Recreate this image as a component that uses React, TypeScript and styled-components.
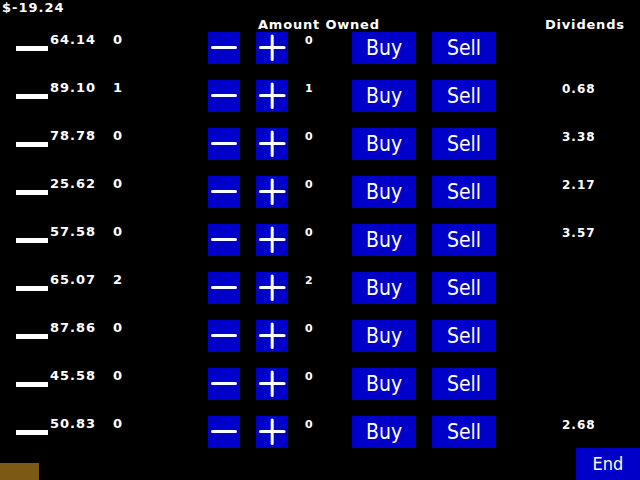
import React from "react";
import styled, { createGlobalStyle } from "styled-components";

const Global = createGlobalStyle`
  html, body { margin: 0; padding: 0; background: #000; overflow: hidden; }
  #root { width: 640px; height: 480px; }
`;

const Page = styled.div`
  width: 640px;
  height: 480px;
  background: #000;
  display: flex;
  flex-direction: column;
  color: #fff;
  font-family: "DejaVu Sans", "Liberation Sans", sans-serif;
  font-weight: bold;
`;

const Money = styled.div`
  height: 16px;
  padding-left: 2px;
  font-size: 13px;
  line-height: 13px;
  letter-spacing: 1px;
  padding-top: 1px;
  box-sizing: border-box;
`;

const cols = "16px 32px 2px 63px 95px 32px 16px 32px 64px 64px 16px 64px 1fr";

const HeaderRow = styled.div`
  height: 16px;
  display: grid;
  grid-template-columns: ${cols};
  font-size: 13px;
  line-height: 13px;
  letter-spacing: 0.8px;
  padding-top: 2px;
  box-sizing: border-box;
`;

const OwnedHeader = styled.div`
  grid-column: 8 / 12;
  padding-left: 2px;
  white-space: nowrap;
`;

const DividendHeader = styled.div`
  grid-column: 13;
  padding-left: 49px;
  white-space: nowrap;
`;

const Rows = styled.div`
  height: 416px;
  display: flex;
  flex-direction: column;
  gap: 16px;
`;

const Row = styled.div`
  height: 32px;
  display: grid;
  grid-template-columns: ${cols};
  align-items: start;
`;

const Bar = styled.div`
  grid-column: 2;
  margin-top: 14px;
  height: 5px;
  background: #fff;
`;

const Small = styled.div<{ $size?: number; $pad?: number; $top?: number }>`
  font-size: ${(p) => p.$size ?? 13}px;
  line-height: ${(p) => p.$size ?? 13}px;
  letter-spacing: 1px;
  padding-left: ${(p) => p.$pad ?? 0}px;
  padding-top: ${(p) => p.$top ?? 0}px;
  white-space: nowrap;
`;

const Button = styled.button<{ $w: number; $size?: number }>`
  width: ${(p) => p.$w}px;
  height: 32px;
  border: none;
  margin: 0;
  padding: 0;
  background: #0000c8;
  color: #fff;
  display: flex;
  align-items: center;
  justify-content: center;
  font-family: "DejaVu Sans Condensed", "DejaVu Sans", sans-serif;
  font-stretch: condensed;
  font-weight: normal;
  font-size: ${(p) => p.$size ?? 21}px;
  line-height: 1;
`;

const Footer = styled.div`
  height: 32px;
  display: flex;
  justify-content: space-between;
  align-items: flex-end;
`;

const Brown = styled.div`
  width: 39px;
  height: 17px;
  background: #7b5b14;
`;

const Minus = () => (
  <svg width="32" height="32" viewBox="0 0 32 32">
    <line x1="4.5" y1="15.5" x2="27.5" y2="15.5" stroke="#fff" strokeWidth="3" strokeLinecap="round" />
  </svg>
);

const Plus = () => (
  <svg width="32" height="32" viewBox="0 0 32 32">
    <line x1="4.5" y1="15.5" x2="28" y2="15.5" stroke="#fff" strokeWidth="3" strokeLinecap="round" />
    <line x1="16.2" y1="4" x2="16.2" y2="27.5" stroke="#fff" strokeWidth="3" strokeLinecap="round" />
  </svg>
);

const data: { price: string; qty: number; div?: string }[] = [
  { price: "64.14", qty: 0 },
  { price: "89.10", qty: 1, div: "0.68" },
  { price: "78.78", qty: 0, div: "3.38" },
  { price: "25.62", qty: 0, div: "2.17" },
  { price: "57.58", qty: 0, div: "3.57" },
  { price: "65.07", qty: 2 },
  { price: "87.86", qty: 0 },
  { price: "45.58", qty: 0 },
  { price: "50.83", qty: 0, div: "2.68" },
];

export default function App() {
  return (
    <Page>
      <Global />
      <Money>$-19.24</Money>
      <HeaderRow>
        <OwnedHeader>Amount Owned</OwnedHeader>
        <DividendHeader>Dividends</DividendHeader>
      </HeaderRow>
      <Rows>
        {data.map((d, i) => (
          <Row key={i}>
            <Bar />
            <span />
            <Small $top={1}>{d.price}</Small>
            <Small $top={1}>{d.qty}</Small>
            <Button $w={32}><Minus /></Button>
            <span />
            <Button $w={32}><Plus /></Button>
            <Small $size={11} $pad={17} $top={3}>{d.qty}</Small>
            <Button $w={64}>Buy</Button>
            <span />
            <Button $w={64}>Sell</Button>
            <Small $size={12} $pad={66} $top={3}>{d.div ?? ""}</Small>
          </Row>
        ))}
      </Rows>
      <Footer>
        <Brown />
        <Button $w={64} $size={18}>End</Button>
      </Footer>
    </Page>
  );
}
